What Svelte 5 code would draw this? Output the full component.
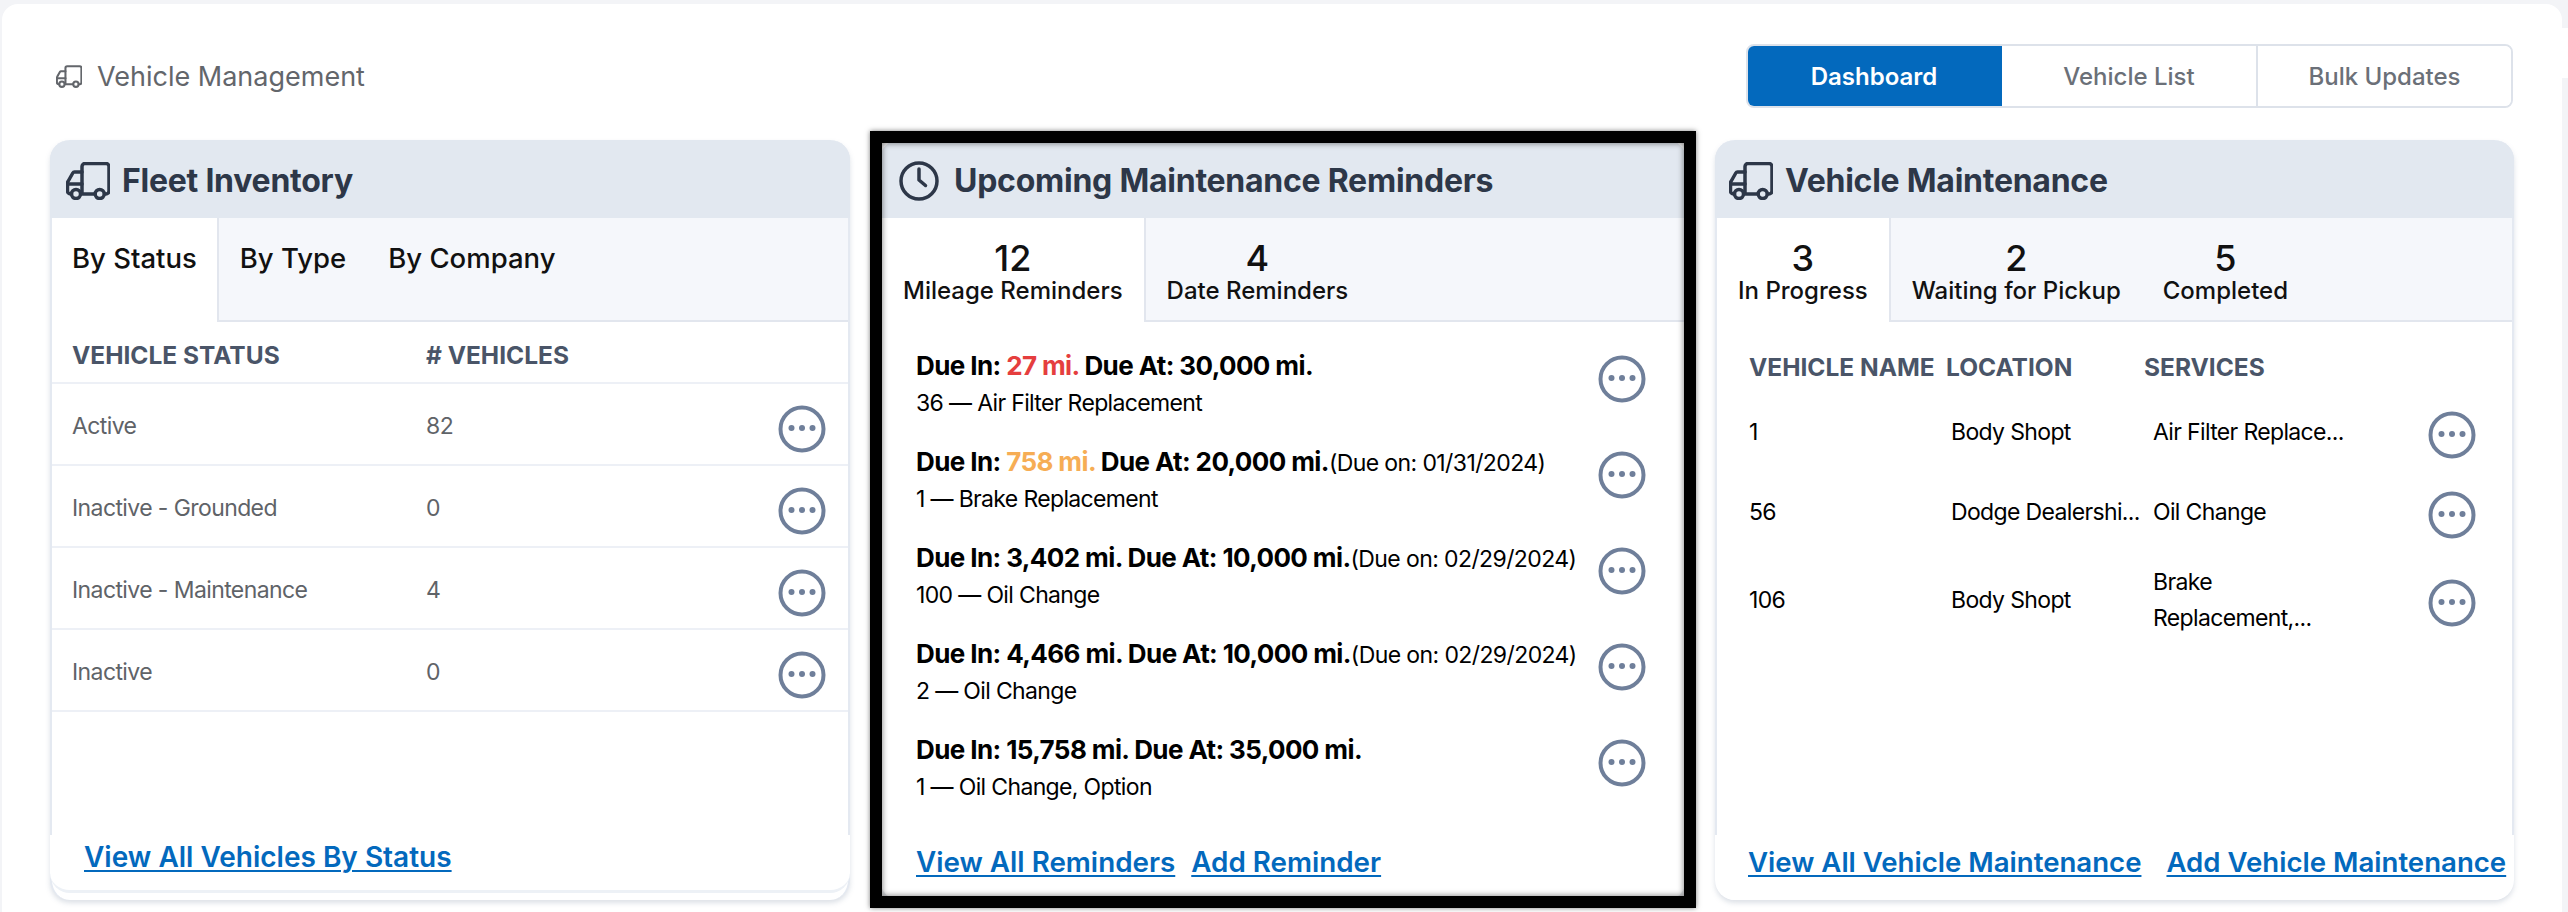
<script lang="ts">
	const statusRows = [
		{ label: 'Active', count: 82 },
		{ label: 'Inactive - Grounded', count: 0 },
		{ label: 'Inactive - Maintenance', count: 4 },
		{ label: 'Inactive', count: 0 }
	];

	const reminders = [
		{ dueIn: '27 mi.', level: 'red', dueAt: '30,000 mi.', date: '', sub: '36 — Air Filter Replacement' },
		{ dueIn: '758 mi.', level: 'orange', dueAt: '20,000 mi.', date: '(Due on: 01/31/2024)', sub: '1 — Brake Replacement' },
		{ dueIn: '3,402 mi.', level: '', dueAt: '10,000 mi.', date: '(Due on: 02/29/2024)', sub: '100 — Oil Change' },
		{ dueIn: '4,466 mi.', level: '', dueAt: '10,000 mi.', date: '(Due on: 02/29/2024)', sub: '2 — Oil Change' },
		{ dueIn: '15,758 mi.', level: '', dueAt: '35,000 mi.', date: '', sub: '1 — Oil Change, Option' }
	];

	const maintenance = [
		{ name: '1', location: 'Body Shopt', services: 'Air Filter Replace...' },
		{ name: '56', location: 'Dodge Dealershi...', services: 'Oil Change' },
		{ name: '106', location: 'Body Shopt', services: 'Brake Replacement,...' }
	];
</script>

{#snippet truck()}
	<svg class="truck" viewBox="0 0 44 38" fill="none" stroke="currentColor" stroke-width="3.5" stroke-linecap="round" stroke-linejoin="round">
		<path d="M16 32V4.500a3 3 0 0 1 3-3h21a3 3 0 0 1 3 3V29a3 3 0 0 1-3 3h-1.500M29 32H15" />
		<path d="M16 10H8.500a2 2 0 0 0-1.700 1L2 19.500a3 3 0 0 0-.5 1.700V29a3 3 0 0 0 3 3h1" />
		<path d="M1.500 22H16" />
		<circle cx="10" cy="32" r="4.500" />
		<circle cx="33.700" cy="32" r="4.500" />
	</svg>
{/snippet}

{#snippet more()}
	<button type="button" class="more" aria-label="More actions">
		<svg viewBox="0 0 48 48" width="48" height="48" fill="none">
			<circle cx="24" cy="24" r="21.500" stroke="#6f7f9a" stroke-width="4" />
			<circle cx="13.500" cy="23" r="3" fill="#6f7f9a" />
			<circle cx="24" cy="23" r="3" fill="#6f7f9a" />
			<circle cx="34.500" cy="23" r="3" fill="#6f7f9a" />
		</svg>
	</button>
{/snippet}

<div class="page">
	<header class="topbar">
		<div class="crumb">
			{@render truck()}
			<span>Vehicle Management</span>
		</div>
		<nav class="switcher">
			<button type="button" class="active">Dashboard</button>
			<button type="button">Vehicle List</button>
			<button type="button">Bulk Updates</button>
		</nav>
	</header>

	<main class="columns">
		<section class="card fleet">
			<h2 class="card-head">{@render truck()}<span>Fleet Inventory</span></h2>
			<div class="tabs plain">
				<button type="button" class="tab active">By Status</button>
				<button type="button" class="tab">By Type</button>
				<button type="button" class="tab">By Company</button>
			</div>
			<div class="status-head">
				<span>Vehicle Status</span>
				<span># Vehicles</span>
			</div>
			{#each statusRows as row}
				<div class="status-row">
					<span>{row.label}</span>
					<span>{row.count}</span>
					{@render more()}
				</div>
			{/each}
			<div class="card-foot fleet-foot">
				<a href="#status">View All Vehicles By Status</a>
			</div>
		</section>

		<section class="card reminders">
			<div class="frame"></div>
			<h2 class="card-head">
				<svg class="clock" viewBox="0 0 40 40" fill="none" stroke="currentColor" stroke-width="3.5" stroke-linecap="round" stroke-linejoin="round">
					<circle cx="20" cy="20" r="18" />
					<path d="M20 8V19l6.500 5.500" />
				</svg>
				<span>Upcoming Maintenance Reminders</span>
			</h2>
			<div class="tabs">
				<button type="button" class="tab count active"><b>12</b>Mileage Reminders</button>
				<button type="button" class="tab count"><b>4</b>Date Reminders</button>
			</div>
			<ul class="reminder-list">
				{#each reminders as item}
					<li>
						<div class="reminder-text">
							<p class="due">Due In: <em class={item.level}>{item.dueIn}</em> Due At: {item.dueAt}<small>{item.date}</small></p>
							<p class="sub">{item.sub}</p>
						</div>
						{@render more()}
					</li>
				{/each}
			</ul>
			<div class="card-foot rem-foot">
				<a href="#reminders">View All Reminders</a>
				<a href="#add">Add Reminder</a>
			</div>
		</section>

		<section class="card service">
			<h2 class="card-head">{@render truck()}<span>Vehicle Maintenance</span></h2>
			<div class="tabs">
				<button type="button" class="tab count active"><b>3</b>In Progress</button>
				<button type="button" class="tab count"><b>2</b>Waiting for Pickup</button>
				<button type="button" class="tab count"><b>5</b>Completed</button>
			</div>
			<div class="service-head">
				<span>Vehicle Name</span>
				<span>Location</span>
				<span>Services</span>
			</div>
			{#each maintenance as row}
				<div class="service-row">
					<span class="name">{row.name}</span>
					<span class="place">{row.location}</span>
					<span class="work">{row.services}</span>
					{@render more()}
				</div>
			{/each}
			<div class="card-foot service-foot">
				<a href="#vehicle-maint">View All Vehicle Maintenance</a>
				<a href="#add-maint">Add Vehicle Maintenance</a>
			</div>
		</section>
	</main>
</div>

<style>
	:global(body) {
		margin: 0;
		background: linear-gradient(#fff, #fff) right 28px / 6px 50px no-repeat, #f3f4f7;
		font-family: Inter, 'Liberation Sans', sans-serif;
	}

	.page {
		box-sizing: border-box;
		width: 2560px;
		height: 908px;
		margin: 4px 0 0 2px;
		padding: 40px 49px 0 48px;
		background: #fff;
		border-radius: 16px 16px 0 0;
		overflow: hidden;
	}

	.topbar {
		display: flex;
		justify-content: space-between;
		align-items: center;
		height: 64px;
		margin-bottom: 32px;
	}

	.crumb {
		display: flex;
		align-items: center;
		gap: 15px;
		padding-left: 6px;
		color: #63666b;
		font-size: 27px;
	}

	.crumb .truck {
		width: 26px;
		height: 23px;
	}

	.switcher {
		display: flex;
		box-sizing: border-box;
		width: 767px;
		height: 64px;
		border: 2px solid #dde2ea;
		border-radius: 8px;
		overflow: hidden;
	}

	.switcher button {
		flex: 1;
		margin: 0;
		padding: 0;
		border: 0;
		border-left: 2px solid #dde2ea;
		background: #fff;
		color: #6b7078;
		font: 500 24px Inter, sans-serif;
		cursor: pointer;
	}

	.switcher button:nth-child(2) {
		flex: none;
		width: 254px;
		border-left: 0;
	}

	.switcher button.active {
		flex: none;
		width: 256px;
		margin: -2px 0 -2px -2px;
		border-left: 0;
		background: #0369bd;
		color: #fff;
		font-weight: 600;
	}

	.columns {
		display: grid;
		grid-template-columns: 800px 806px 798px;
		gap: 30px;
	}

	.service {
		margin-left: -1px;
	}

	.card {
		position: relative;
		display: flex;
		flex-direction: column;
		box-sizing: border-box;
		height: 760px;
		border: solid #e4e9f1;
		border-width: 0 2px;
		border-radius: 20px;
		background: #fff;
		box-shadow: 0 3px 5px rgba(120, 135, 160, 0.25);
	}

	.card-head {
		display: flex;
		align-items: center;
		gap: 12px;
		box-sizing: border-box;
		height: 78px;
		margin: 0 -2px;
		padding: 3px 0 0 16px;
		border-radius: 20px 20px 0 0;
		background: #e2e8f0;
		color: #2d3748;
		font-size: 32px;
		font-weight: 700;
		letter-spacing: -0.25px;
	}

	.reminders .card-head {
		padding-left: 19px;
	}

	.service .card-head {
		padding-left: 14px;
	}

	.truck {
		flex: none;
		width: 44px;
		height: 38px;
	}

	.clock {
		flex: none;
		width: 40px;
		height: 40px;
		margin-right: 3px;
	}

	.tabs {
		display: flex;
		box-sizing: border-box;
		height: 104px;
		border-bottom: 2px solid #e2e6ee;
		background: #f5f7fb;
	}

	.tab {
		display: flex;
		flex-direction: column;
		align-items: center;
		justify-content: flex-start;
		box-sizing: border-box;
		height: 104px;
		padding: 22px 21px 0;
		border: 0;
		background: none;
		color: #111;
		font: 500 24px/30px Inter, sans-serif;
		white-space: nowrap;
		cursor: pointer;
	}

	.plain .tab {
		padding: 25px 21px 0;
		font-size: 27.5px;
		line-height: 30px;
	}

	.plain .tab.active {
		padding-left: 20px;
		padding-right: 20px;
	}

	.tab.active {
		border-right: 2px solid #e2e6ee;
		background: #fff;
	}

	.tab.count b {
		display: block;
		font-size: 36px;
		font-weight: 500;
		line-height: 36px;
	}

	.status-head {
		display: grid;
		grid-template-columns: 354px 1fr;
		align-items: center;
		box-sizing: border-box;
		height: 62px;
		padding: 6px 20px 0;
		border-bottom: 2px solid #edf0f6;
		color: #4a5568;
		font-size: 24.5px;
		font-weight: 700;
		text-transform: uppercase;
	}

	.status-row {
		display: grid;
		grid-template-columns: 354px 1fr 48px;
		align-items: center;
		box-sizing: border-box;
		height: 82px;
		padding: 3px 22px 0 20px;
		border-bottom: 2px solid #edf0f6;
		color: #5f6368;
		font-size: 23px;
		letter-spacing: -0.6px;
	}

	.more {
		display: block;
		width: 48px;
		height: 48px;
		margin: 7px 0 0;
		padding: 0;
		border: 0;
		background: none;
		cursor: pointer;
	}

	.more svg {
		display: block;
	}

	.card-foot {
		position: absolute;
		left: -2px;
		right: -2px;
		bottom: 0;
		display: flex;
		box-sizing: border-box;
		height: 65px;
		padding-top: 10px;
		background: #fff;
		border-radius: 0 0 20px 20px;
		font-size: 28px;
		font-weight: 600;
		line-height: 34px;
		white-space: nowrap;
	}

	.card-foot a {
		color: #0369bd;
		text-decoration: underline;
		text-underline-offset: 3px;
		text-decoration-thickness: 2px;
	}

	.fleet-foot {
		bottom: 7px;
		height: 58px;
		padding: 5px 0 0 34px;
		border-bottom: 3px solid #edf1f6;
	}

	.rem-foot {
		gap: 16px;
		padding-left: 36px;
		font-size: 27.8px;
	}

	.service-foot {
		gap: 25px;
		padding-left: 33px;
		font-size: 27.6px;
	}

	.frame {
		position: absolute;
		z-index: 2;
		top: -9px;
		left: -12px;
		right: -12px;
		bottom: -8px;
		border: 12px solid #000;
		box-shadow: 0 0 5px rgba(0, 0, 0, 0.5), inset 0 0 6px rgba(0, 0, 0, 0.55);
		pointer-events: none;
	}

	.reminder-list {
		margin: 0;
		padding: 14px 38px 0 34px;
		list-style: none;
	}

	.reminder-list li {
		display: flex;
		justify-content: space-between;
		align-items: flex-start;
		box-sizing: border-box;
		height: 96px;
		padding-top: 12px;
	}

	.reminder-text {
		white-space: nowrap;
	}

	.reminder-text p {
		margin: 0;
		color: #000;
	}

	.due {
		font-size: 26px;
		font-weight: 700;
		line-height: 36px;
		letter-spacing: -0.6px;
	}

	.due em {
		font-style: normal;
	}

	.due em.red {
		color: #e53e3e;
	}

	.due em.orange {
		color: #f6ad55;
	}

	.due small {
		font-size: 23px;
		font-weight: 400;
	}

	.sub {
		font-size: 23px;
		line-height: 36px;
		letter-spacing: -0.65px;
	}

	.service-head {
		display: grid;
		grid-template-columns: 197px 198px 1fr;
		align-items: center;
		box-sizing: border-box;
		height: 70px;
		padding: 20px 32px 0;
		color: #4a5568;
		font-size: 24.5px;
		font-weight: 700;
		text-transform: uppercase;
	}

	.service-row {
		display: grid;
		grid-template-columns: 202px 202px 1fr 48px;
		align-items: center;
		box-sizing: border-box;
		min-height: 80px;
		padding: 12px 36px 12px 32px;
		color: #000;
		font-size: 23px;
		line-height: 36px;
		letter-spacing: -0.65px;
	}

	.service-row .place {
		white-space: nowrap;
	}

	.service-row .work {
		width: 200px;
	}

	.service-row .more {
		margin-top: 6px;
	}
</style>
